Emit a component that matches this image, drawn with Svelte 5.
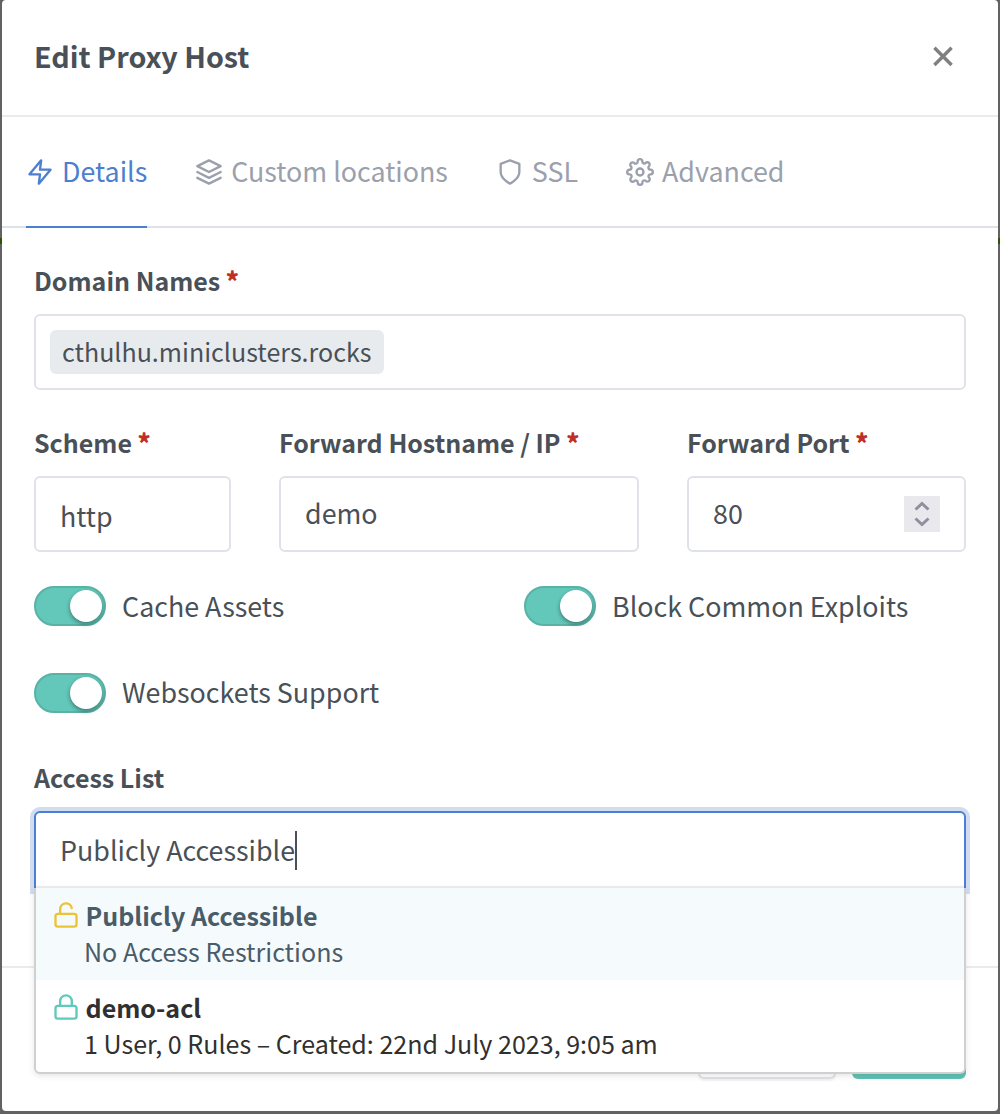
<script>
  const tabs = [
    { id: 'details', label: 'Details', active: true },
    { id: 'locations', label: 'Custom locations' },
    { id: 'ssl', label: 'SSL' },
    { id: 'advanced', label: 'Advanced' }
  ];
  const toggles = [
    { id: 'cache', label: 'Cache Assets' },
    { id: 'exploits', label: 'Block Common Exploits' },
    { id: 'websockets', label: 'Websockets Support' }
  ];
  const options = [
    { id: 'public', name: 'Publicly Accessible', note: 'No Access Restrictions', open: true },
    { id: 'demo', name: 'demo-acl', note: '1 User, 0 Rules – Created: 22nd July 2023, 9:05 am', open: false }
  ];
</script>

<div class="backdrop">
  <div class="modal">
    <header class="header">
      <h1 class="title">Edit Proxy Host</h1>
      <button class="close" aria-label="Close">
        <svg width="20" height="20" viewBox="0 0 20 20"><path d="M1.4 1.8l17.2 17.2M18.6 1.8L1.4 19" /></svg>
      </button>
    </header>

    <nav class="tabs">
      {#each tabs as tab}
        <div class="tab" class:active={tab.active}>
          <svg class="icon" viewBox="0 0 24 24">
            {#if tab.id === 'details'}
              <path d="M13 2L3 14h9l-1 8 10-12h-9l1-8z" />
            {:else if tab.id === 'locations'}
              <path d="M12 2L2 7l10 5 10-5-10-5zM2 17l10 5 10-5M2 12l10 5 10-5" />
            {:else if tab.id === 'ssl'}
              <path d="M12 22s8-4 8-10V5l-8-3-8 3v7c0 6 8 10 8 10z" />
            {:else}
              <circle cx="12" cy="12" r="3" />
              <path d="M19.4 15a1.65 1.65 0 0 0 .33 1.82l.06.06a2 2 0 0 1 0 2.83 2 2 0 0 1-2.83 0l-.06-.06a1.65 1.65 0 0 0-1.82-.33 1.65 1.65 0 0 0-1 1.51V21a2 2 0 0 1-2 2 2 2 0 0 1-2-2v-.09A1.65 1.65 0 0 0 9 19.4a1.65 1.65 0 0 0-1.82.33l-.06.06a2 2 0 0 1-2.83 0 2 2 0 0 1 0-2.83l.06-.06a1.65 1.65 0 0 0 .33-1.82 1.65 1.65 0 0 0-1.51-1H3a2 2 0 0 1-2-2 2 2 0 0 1 2-2h.09A1.65 1.65 0 0 0 4.6 9a1.65 1.65 0 0 0-.33-1.82l-.06-.06a2 2 0 0 1 0-2.83 2 2 0 0 1 2.83 0l.06.06a1.65 1.65 0 0 0 1.82.33H9a1.65 1.65 0 0 0 1-1.51V3a2 2 0 0 1 2-2 2 2 0 0 1 2 2v.09a1.65 1.65 0 0 0 1 1.51 1.65 1.65 0 0 0 1.82-.33l.06-.06a2 2 0 0 1 2.83 0 2 2 0 0 1 0 2.83l-.06.06a1.65 1.65 0 0 0-.33 1.82V9a1.65 1.65 0 0 0 1.51 1H21a2 2 0 0 1 2 2 2 2 0 0 1-2 2h-.09a1.65 1.65 0 0 0-1.51 1z" />
            {/if}
          </svg>
          <span>{tab.label}</span>
        </div>
      {/each}
    </nav>

    <section class="body">
      <div class="label">Domain Names <b>*</b></div>
      <div class="input domains"><span class="chip">cthulhu.miniclusters.rocks</span></div>

      <div class="row">
        <div class="field">
          <div class="label">Scheme <b>*</b></div>
          <div class="input select"><span>http</span></div>
        </div>
        <div class="field">
          <div class="label">Forward Hostname / IP <b>*</b></div>
          <div class="input"><span>demo</span></div>
        </div>
        <div class="field">
          <div class="label">Forward Port <b>*</b></div>
          <div class="input">
            <span>80</span>
            <svg class="spinner" width="36" height="36" viewBox="0 0 36 36">
              <path d="M11.500 13.500l6.500-6 6.500 6M11.500 22.500l6.500 6 6.500-6" />
            </svg>
          </div>
        </div>
      </div>

      <div class="toggles">
        {#each toggles as toggle}
          <div class="toggle {toggle.id}">
            <i class="switch"></i>
            <span>{toggle.label}</span>
          </div>
        {/each}
      </div>

      <div class="label access">Access List</div>
      <div class="combo">
        <div class="input focused"><span>Publicly Accessible</span><i class="caret"></i></div>
        <div class="menu">
          {#each options as option}
            <div class="option" class:selected={option.open}>
              <svg class="icon lock" viewBox="0 0 24 24">
                <rect x="3" y="11" width="18" height="11" rx="2" />
                {#if option.open}
                  <path d="M7 11V7a5 5 0 0 1 9.900-1" />
                {:else}
                  <path d="M7 11V7a5 5 0 0 1 10 0v4" />
                {/if}
              </svg>
              <div class="name">{option.name}</div>
              <div class="note">{option.note}</div>
            </div>
          {/each}
        </div>
      </div>
    </section>

    <footer class="footer">
      <div class="btn cancel"></div>
      <div class="btn save"></div>
    </footer>
  </div>
</div>

<style>
  :global(body) {
    background: #606162;
  }
  .backdrop {
    box-sizing: border-box;
    height: 1114px;
    padding: 0 2px 3px;
    background: linear-gradient(#2f5300, #2f5300) 0 238px / 100% 6px no-repeat, #626262;
    color: #495057;
    font-family: 'Noto Sans CJK JP', 'Open Sans', sans-serif;
    font-size: 26.850px;
    overflow: hidden;
  }
  .modal {
    box-sizing: border-box;
    height: 1111px;
    background: #fff;
    border-radius: 4px;
    display: flex;
    flex-direction: column;
  }
  .header {
    box-sizing: border-box;
    height: 117px;
    flex: none;
    padding: 0 45px 3px 32px;
    border-bottom: 2px solid #e9ecef;
    display: flex;
    align-items: center;
    justify-content: space-between;
  }
  .title {
    margin: 0;
    font-size: 28.700px;
    font-weight: 700;
    line-height: 40px;
  }
  .close {
    display: flex;
    padding: 0;
    border: 0;
    background: none;
  }
  .close svg {
    overflow: visible;
  }
  .close path {
    fill: none;
    stroke: #808080;
    stroke-width: 3.400;
  }
  .tabs {
    box-sizing: border-box;
    height: 111px;
    flex: none;
    display: flex;
    gap: 48px;
    padding-left: 24px;
    border-bottom: 2px solid #dee2e6;
  }
  .tab {
    box-sizing: border-box;
    height: 111px;
    display: flex;
    align-items: center;
    gap: 8px;
    border-bottom: 2px solid transparent;
    color: #9aa0ac;
    line-height: 40px;
  }
  .tab span {
    padding-bottom: 2px;
  }
  .tab.active {
    color: #4c7fcf;
    border-color: #4c7fcf;
  }
  .icon {
    width: 28px;
    height: 28px;
    flex: none;
    fill: none;
    stroke: currentColor;
    stroke-width: 2;
    stroke-linecap: round;
    stroke-linejoin: round;
  }
  .body {
    height: 738px;
    flex: none;
    padding: 32px 32px 0;
    box-sizing: border-box;
  }
  .label {
    height: 40px;
    margin-bottom: 14px;
    font-size: 25px;
    font-weight: 700;
    line-height: 40px;
    white-space: nowrap;
  }
  .label b {
    color: #bf2f27;
  }
  .input {
    box-sizing: border-box;
    height: 76px;
    padding: 0 24px;
    border: 2px solid #dfe2e8;
    border-radius: 6px;
    background: #fff;
    display: flex;
    align-items: center;
    line-height: 40px;
  }
  .input > span:not(.chip) {
    padding-bottom: 2px;
  }
  .domains {
    padding: 0 14px;
    margin-bottom: 32px;
  }
  .chip {
    height: 44px;
    padding: 0 12px;
    border-radius: 6px;
    background: #e8ebee;
    font-size: 25.050px;
    line-height: 42px;
  }
  .row {
    display: grid;
    grid-template-columns: 197px 360px 279px;
    gap: 48px;
  }
  .select {
    padding-top: 5px;
  }
  .spinner {
    margin-left: auto;
    background: #e9e9ed;
    fill: none;
    stroke: #8f8f9d;
    stroke-width: 3;
  }
  .toggles {
    display: grid;
    grid-template-columns: 490px 1fr;
    row-gap: 47px;
    margin-top: 34px;
  }
  .toggle {
    display: flex;
    align-items: center;
    gap: 16px;
    height: 40px;
    line-height: 40px;
  }
  .websockets span {
    padding-bottom: 2px;
  }
  .switch {
    box-sizing: border-box;
    width: 72px;
    height: 40px;
    padding: 2px;
    border: 2px solid #56b3a6;
    border-radius: 20px;
    background: #63c7b9;
    display: flex;
    justify-content: flex-end;
  }
  .switch::after {
    content: '';
    width: 32px;
    height: 32px;
    border-radius: 50%;
    background: #fff;
    box-shadow: 0 2px 4px rgba(0, 0, 0, 0.4);
  }
  .access {
    margin-top: 44px;
  }
  .combo {
    position: relative;
  }
  .focused {
    height: 79px;
    border-color: #4c7fcf;
    border-radius: 6px 6px 0 0;
    box-shadow: 0 0 0 4px #d1dcf1;
  }
  .caret {
    width: 2px;
    height: 39px;
    margin-bottom: 1px;
    background: #495057;
  }
  .menu {
    position: absolute;
    top: 77px;
    left: 0;
    right: 0;
    box-sizing: border-box;
    height: 186px;
    border: 2px solid #d0d0d0;
    border-top: 0;
    border-radius: 0 0 6px 6px;
    background: #fff;
    box-shadow: 0 2px 6px rgba(0, 0, 0, 0.1);
    color: #303030;
    font-size: 25.050px;
  }
  /* divider between the text box and the list, kept inside the side borders */
  .menu::before {
    content: '';
    position: absolute;
    top: -2px;
    left: 0;
    right: 0;
    height: 2px;
    background: #e9eaeb;
  }
  .option {
    box-sizing: border-box;
    height: 92px;
    padding: 9px 16px;
    display: grid;
    grid-template-columns: 33.500px 1fr;
    grid-template-rows: 36px 36px;
    line-height: 36px;
  }
  .selected {
    background: #f5fafd;
    color: #495c68;
  }
  .lock {
    width: 28px;
    height: 28px;
    margin-top: 3.500px;
    color: #5ecaba;
  }
  .selected .lock {
    color: #edc336;
  }
  .name {
    font-weight: 700;
  }
  .note {
    grid-column: 2;
    margin-left: -1.500px;
    white-space: nowrap;
  }
  .footer {
    flex: 1;
    border-top: 2px solid #e9ecef;
    padding: 34px 32px;
    display: flex;
    justify-content: flex-end;
    align-items: flex-start;
    gap: 16px;
  }
  .btn {
    box-sizing: border-box;
    height: 77px;
    border-radius: 6px;
  }
  .cancel {
    width: 138px;
    border: 2px solid #dee2e6;
    box-shadow: 0 2px 2px rgba(0, 0, 0, 0.06);
  }
  .save {
    width: 114px;
    background: #5ec2b4;
  }
</style>
